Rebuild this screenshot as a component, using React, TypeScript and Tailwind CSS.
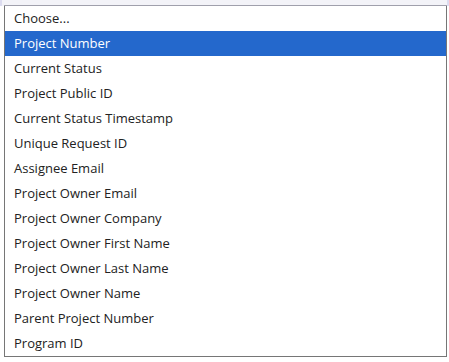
const options = [
  "Choose...",
  "Project Number",
  "Current Status",
  "Project Public ID",
  "Current Status Timestamp",
  "Unique Request ID",
  "Assignee Email",
  "Project Owner Email",
  "Project Owner Company",
  "Project Owner First Name",
  "Project Owner Last Name",
  "Project Owner Name",
  "Parent Project Number",
  "Program ID",
];

export default function App() {
  return (
    <div className="h-[362px] w-[449px] bg-white font-['Open_Sans',sans-serif]">
      <div className="flex h-[6px]">
        <div className="w-[2px] bg-[#dcdcf0]" />
        <div className="w-[2px] bg-[#f3f3f8]" />
        <div className="w-[443px] border-b border-[#a0a0ac] bg-[#f3f3f8]" />
        <div className="w-[2px] bg-[#dcdcf0]" />
      </div>
      <ul className="ml-[4px] w-[443px] border-x border-b border-[#767676] bg-white">
        {options.map((opt, i) => (
          <li
            key={opt}
            className={
              i === 1
                ? "flex h-[25px] items-center bg-[#2468cc] pl-[9px] text-[13px] text-white"
                : "flex h-[25px] items-center pl-[9px] text-[13px] text-[#222]"
            }
          >
            {opt}
          </li>
        ))}
      </ul>
    </div>
  );
}
